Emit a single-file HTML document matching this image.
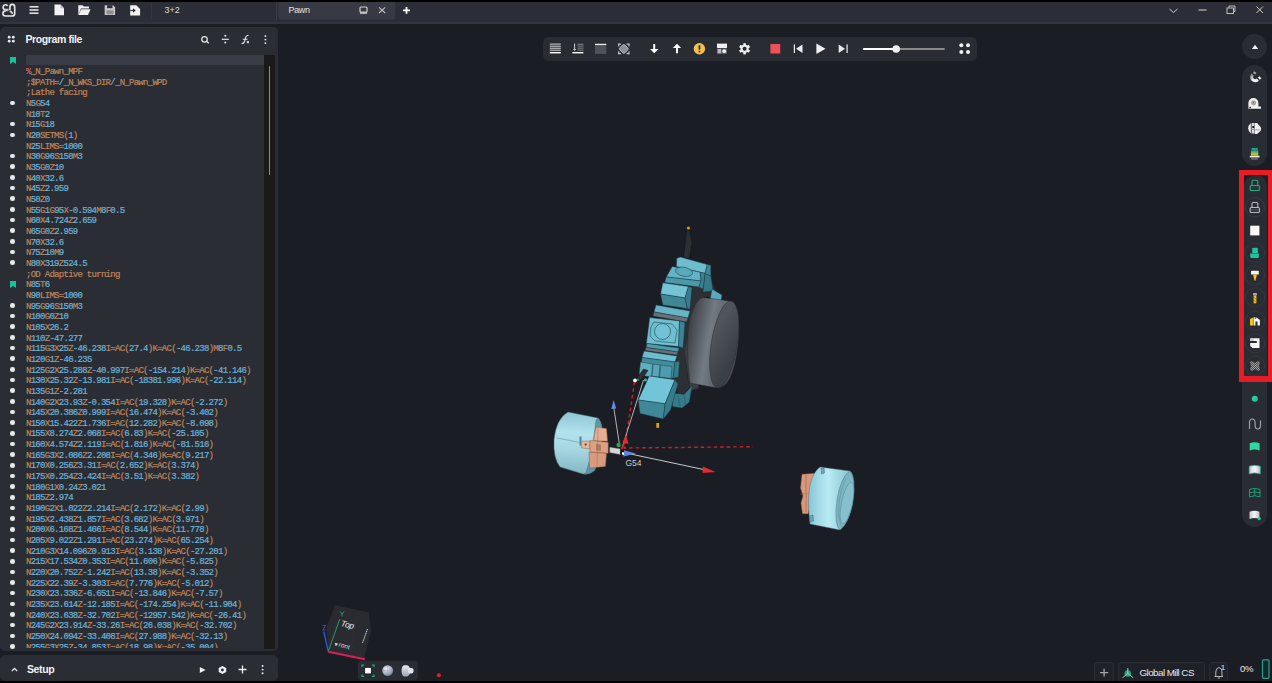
<!DOCTYPE html>
<html><head><meta charset="utf-8">
<style>
*{box-sizing:border-box}
html,body{margin:0;padding:0}
body{width:1272px;height:683px;overflow:hidden;background:#1b1d25;position:relative;font-family:"Liberation Sans",sans-serif;color:#e6e6e6}
.a{position:absolute}
#topblack{left:0;top:0;width:1272px;height:2px;background:#000}
#botblack{left:0;top:681px;width:1272px;height:2px;background:#000}
#title{left:0;top:2px;width:1272px;height:20px;background:#2b2e37}
#titleline{left:0;top:22px;width:1272px;height:1.5px;background:#31343d}
#panel{left:0;top:26.5px;width:278px;height:624px;background:#2b2d35;border-radius:5px;border-top:1px solid #30323a}
#setup{left:0;top:655px;width:278px;height:25.5px;background:#2b2d35;border-radius:5px}
.ptitle{font-weight:bold;font-size:10.5px;letter-spacing:-0.4px;color:#f2f2f2}
#code{left:26px;top:29px;width:238px;height:591.5px;overflow:hidden;font-family:"Liberation Mono",monospace;font-size:9px;letter-spacing:-0.72px;line-height:10.66px;-webkit-text-stroke:0.2px currentColor}
.ln{height:10.66px;white-space:pre}
.ln i,.ln b{font-style:normal;font-weight:normal}
#hl{left:26px;top:27px;width:238px;height:10px;background:#3a3c45}
#sb{left:264px;top:27px;width:11px;height:594.5px;background:#1a1a1b}
#sbthumb{left:268.6px;top:38px;width:1.8px;height:109.5px;background:#8c8c8c;border-radius:1px}
.dot{position:absolute;left:10.4px;width:4.6px;height:4.6px;border-radius:50%;background:#e8e8e8}
.bm{position:absolute;left:9.8px}
#gutter{left:0;top:28.8px;width:26px;height:593px}
#tb{left:543px;top:36.5px;width:434px;height:24px;background:#2a2c34;border-radius:6px}
.rpill{background:#2a2c34;border-radius:13px}
</style></head>
<body>
<div id="topblack" class="a"></div>
<div id="title" class="a"></div>
<div id="titleline" class="a"></div>

<!-- title bar icons -->
<svg class="a" style="left:0;top:0" width="1272" height="22" viewBox="0 0 1272 22">
  <!-- logo -->
  <g fill="none" stroke="#e8e8e8" stroke-width="1.6" stroke-linecap="round">
    <path d="M7.2 5.3Q5.6 4.2 4.2 5.2Q2.9 6.2 3.1 7.8Q3.3 9.3 5.2 9.7"/>
    <path d="M5.4 10.9Q2.9 11.3 2.9 13.5Q2.9 16 5.6 16H8.4"/>
    <path d="M9 16H12.2Q14.7 16 14.7 13.4V7Q14.7 4.4 12.2 4.4Q9.9 4.4 9.9 7V9.5"/>
    <path d="M10.4 11.2L12.3 13.1"/>
  </g>
  <rect x="5" y="8.7" width="3.6" height="2.5" fill="#c4c4c4"/>
  <!-- hamburger -->
  <g fill="#e0e0e0"><rect x="29.5" y="6" width="9" height="1.6"/><rect x="29.5" y="9.2" width="9" height="1.6"/><rect x="29.5" y="12.4" width="9" height="1.6"/></g>
  <!-- new file -->
  <path d="M54.5 4.6H60.5L64 8.2V15.2H54.5Z" fill="#f2f2f2"/><path d="M60.5 4.6V8.2H64" fill="#bdbdbd"/>
  <!-- folder -->
  <path d="M78.3 5.2H82.5L83.8 6.5H89V8.5H81L78.3 15Z" fill="#f0f0f0"/><path d="M81.3 9.2H90.6L88 15H78.3Z" fill="#f0f0f0"/>
  <!-- save -->
  <path d="M104.7 5.2H113L115.1 7.3V15H104.7Z" fill="#c9c9c9"/><rect x="107" y="5.2" width="5.5" height="3" fill="#2b2e37"/><rect x="106.5" y="10.3" width="7" height="4" fill="#8d8d8d"/>
  <!-- import -->
  <path d="M130.2 5.2H136.3L140.1 9V15.6H130.2Z" fill="#f2f2f2"/><path d="M130.2 10.5H134.5M133 9L134.8 10.5L133 12" stroke="#2b2e37" stroke-width="1.2" fill="none"/>
  <rect x="151" y="2.4" width="1" height="16" fill="#33363f"/>
  <!-- tab -->
  <rect x="276" y="2" width="1" height="18" fill="#3a3c44"/>
  <path d="M278.5 2H395.3V16.5Q395.3 19.5 392.3 19.5H281.5Q278.5 19.5 278.5 16.5Z" fill="#383a43"/>
  <!-- monitor icon -->
  <rect x="360" y="7" width="7" height="5.2" rx="1" fill="none" stroke="#cfcfcf" stroke-width="1.2"/><rect x="360" y="12.4" width="7" height="1.4" fill="#cfcfcf"/>
  <path d="M379 7.3L385.2 13M385.2 7.3L379 13" stroke="#bdbdbd" stroke-width="1.1"/>
  <path d="M403 10.3H410M406.5 6.9V13.7" stroke="#ffffff" stroke-width="1.8"/>
  <!-- window controls -->
  <path d="M1169.5 9L1173.5 12.5L1177.5 9" stroke="#cfcfcf" stroke-width="1" fill="none"/>
  <path d="M1198.5 10H1206.5" stroke="#bdbdbd" stroke-width="1.2"/>
  <rect x="1227" y="8" width="6.5" height="5.5" fill="none" stroke="#bdbdbd" stroke-width="1"/><path d="M1229 8V6H1235V11.5H1233.5" fill="none" stroke="#bdbdbd" stroke-width="1"/>
  <path d="M1256.5 6.5L1263 13M1263 6.5L1256.5 13" stroke="#cfcfcf" stroke-width="1"/>
</svg>
<div class="a" style="left:164.5px;top:4.6px;font-size:9px;color:#dcdcdc">3+2</div>
<div class="a" style="left:288.5px;top:4.6px;font-size:9px;letter-spacing:-0.35px;color:#e4e4e4">Pawn</div>

<!-- program panel -->
<div id="panel" class="a">
  <div id="hl" class="a"></div>
  <div id="sb" class="a"></div>
  <div id="sbthumb" class="a"></div>
  <div id="gutter" class="a"><svg class="bm" style="top:0.80px" width="6" height="7" viewBox="0 0 6 7"><path d="M0 0H6V7L3 5L0 7Z" fill="#19c39a"/></svg><div class="dot" style="top:44.24px"></div><div class="dot" style="top:65.56px"></div><div class="dot" style="top:76.22px"></div><div class="dot" style="top:97.54px"></div><div class="dot" style="top:108.20px"></div><div class="dot" style="top:118.86px"></div><div class="dot" style="top:129.52px"></div><div class="dot" style="top:140.18px"></div><div class="dot" style="top:150.84px"></div><div class="dot" style="top:161.50px"></div><div class="dot" style="top:172.16px"></div><div class="dot" style="top:182.82px"></div><div class="dot" style="top:193.48px"></div><div class="dot" style="top:204.14px"></div><svg class="bm" style="top:224.66px" width="6" height="7" viewBox="0 0 6 7"><path d="M0 0H6V7L3 5L0 7Z" fill="#19c39a"/></svg><div class="dot" style="top:246.78px"></div><div class="dot" style="top:257.44px"></div><div class="dot" style="top:268.10px"></div><div class="dot" style="top:278.76px"></div><div class="dot" style="top:289.42px"></div><div class="dot" style="top:300.08px"></div><div class="dot" style="top:310.74px"></div><div class="dot" style="top:321.40px"></div><div class="dot" style="top:332.06px"></div><div class="dot" style="top:342.72px"></div><div class="dot" style="top:353.38px"></div><div class="dot" style="top:364.04px"></div><div class="dot" style="top:374.70px"></div><div class="dot" style="top:385.36px"></div><div class="dot" style="top:396.02px"></div><div class="dot" style="top:406.68px"></div><div class="dot" style="top:417.34px"></div><div class="dot" style="top:428.00px"></div><div class="dot" style="top:438.66px"></div><div class="dot" style="top:449.32px"></div><div class="dot" style="top:459.98px"></div><div class="dot" style="top:470.64px"></div><div class="dot" style="top:481.30px"></div><div class="dot" style="top:491.96px"></div><div class="dot" style="top:502.62px"></div><div class="dot" style="top:513.28px"></div><div class="dot" style="top:523.94px"></div><div class="dot" style="top:534.60px"></div><div class="dot" style="top:545.26px"></div><div class="dot" style="top:555.92px"></div><div class="dot" style="top:566.58px"></div><div class="dot" style="top:577.24px"></div><div class="dot" style="top:587.90px"></div></div>
  <div id="code" class="a"><div class="ln">&nbsp;</div>
<div class="ln"><span style="color:#bf875b"><b style="color:#d8665a">%</b>_N_Pawn_MPF</span></div>
<div class="ln"><span style="color:#bf875b">;$PATH=<b style="color:#6cb4da">/</b>_N_WKS_DIR<b style="color:#6cb4da">/</b>_N_Pawn_WPD</span></div>
<div class="ln"><span style="color:#bf875b">;Lathe facing</span></div>
<div class="ln"><span style="color:#bf875b">N<i style="color:#6cb4da">5</i>G<i style="color:#6cb4da">54</i></span></div>
<div class="ln"><span style="color:#bf875b">N<i style="color:#6cb4da">10</i>T<i style="color:#6cb4da">2</i></span></div>
<div class="ln"><span style="color:#bf875b">N<i style="color:#6cb4da">15</i>G<i style="color:#6cb4da">18</i></span></div>
<div class="ln"><span style="color:#bf875b">N<i style="color:#6cb4da">20</i>SETMS(<i style="color:#6cb4da">1</i>)</span></div>
<div class="ln"><span style="color:#bf875b">N<i style="color:#6cb4da">25</i>LIMS=<i style="color:#6cb4da">1000</i></span></div>
<div class="ln"><span style="color:#bf875b">N<i style="color:#6cb4da">30</i>G<i style="color:#6cb4da">96</i>S<i style="color:#6cb4da">150</i>M<i style="color:#6cb4da">3</i></span></div>
<div class="ln"><span style="color:#bf875b">N<i style="color:#6cb4da">35</i>G<i style="color:#6cb4da">0</i>Z<i style="color:#6cb4da">10</i></span></div>
<div class="ln"><span style="color:#bf875b">N<i style="color:#6cb4da">40</i>X<i style="color:#6cb4da">32.6</i></span></div>
<div class="ln"><span style="color:#bf875b">N<i style="color:#6cb4da">45</i>Z<i style="color:#6cb4da">2.959</i></span></div>
<div class="ln"><span style="color:#bf875b">N<i style="color:#6cb4da">50</i>Z<i style="color:#6cb4da">0</i></span></div>
<div class="ln"><span style="color:#bf875b">N<i style="color:#6cb4da">55</i>G<i style="color:#6cb4da">1</i>G<i style="color:#6cb4da">95</i>X<i style="color:#6cb4da">-0.594</i>M<i style="color:#6cb4da">8</i>F<i style="color:#6cb4da">0.5</i></span></div>
<div class="ln"><span style="color:#bf875b">N<i style="color:#6cb4da">60</i>X<i style="color:#6cb4da">4.724</i>Z<i style="color:#6cb4da">2.659</i></span></div>
<div class="ln"><span style="color:#bf875b">N<i style="color:#6cb4da">65</i>G<i style="color:#6cb4da">0</i>Z<i style="color:#6cb4da">2.959</i></span></div>
<div class="ln"><span style="color:#bf875b">N<i style="color:#6cb4da">70</i>X<i style="color:#6cb4da">32.6</i></span></div>
<div class="ln"><span style="color:#bf875b">N<i style="color:#6cb4da">75</i>Z<i style="color:#6cb4da">10</i>M<i style="color:#6cb4da">9</i></span></div>
<div class="ln"><span style="color:#bf875b">N<i style="color:#6cb4da">80</i>X<i style="color:#6cb4da">319</i>Z<i style="color:#6cb4da">524.5</i></span></div>
<div class="ln"><span style="color:#bf875b">;OD Adaptive turning</span></div>
<div class="ln"><span style="color:#bf875b">N<i style="color:#6cb4da">85</i>T<i style="color:#6cb4da">6</i></span></div>
<div class="ln"><span style="color:#bf875b">N<i style="color:#6cb4da">90</i>LIMS=<i style="color:#6cb4da">1000</i></span></div>
<div class="ln"><span style="color:#bf875b">N<i style="color:#6cb4da">95</i>G<i style="color:#6cb4da">96</i>S<i style="color:#6cb4da">150</i>M<i style="color:#6cb4da">3</i></span></div>
<div class="ln"><span style="color:#bf875b">N<i style="color:#6cb4da">100</i>G<i style="color:#6cb4da">0</i>Z<i style="color:#6cb4da">10</i></span></div>
<div class="ln"><span style="color:#bf875b">N<i style="color:#6cb4da">105</i>X<i style="color:#6cb4da">26.2</i></span></div>
<div class="ln"><span style="color:#bf875b">N<i style="color:#6cb4da">110</i>Z<i style="color:#6cb4da">-47.277</i></span></div>
<div class="ln"><span style="color:#bf875b">N<i style="color:#6cb4da">115</i>G<i style="color:#6cb4da">3</i>X<i style="color:#6cb4da">25</i>Z<i style="color:#6cb4da">-46.238</i>I=AC(<i style="color:#6cb4da">27.4</i>)K=AC(<i style="color:#6cb4da">-46.238</i>)M<i style="color:#6cb4da">8</i>F<i style="color:#6cb4da">0.5</i></span></div>
<div class="ln"><span style="color:#bf875b">N<i style="color:#6cb4da">120</i>G<i style="color:#6cb4da">1</i>Z<i style="color:#6cb4da">-46.235</i></span></div>
<div class="ln"><span style="color:#bf875b">N<i style="color:#6cb4da">125</i>G<i style="color:#6cb4da">2</i>X<i style="color:#6cb4da">25.288</i>Z<i style="color:#6cb4da">-40.997</i>I=AC(<i style="color:#6cb4da">-154.214</i>)K=AC(<i style="color:#6cb4da">-41.146</i>)</span></div>
<div class="ln"><span style="color:#bf875b">N<i style="color:#6cb4da">130</i>X<i style="color:#6cb4da">25.32</i>Z<i style="color:#6cb4da">-13.981</i>I=AC(<i style="color:#6cb4da">-18381.996</i>)K=AC(<i style="color:#6cb4da">-22.114</i>)</span></div>
<div class="ln"><span style="color:#bf875b">N<i style="color:#6cb4da">135</i>G<i style="color:#6cb4da">1</i>Z<i style="color:#6cb4da">-2.281</i></span></div>
<div class="ln"><span style="color:#bf875b">N<i style="color:#6cb4da">140</i>G<i style="color:#6cb4da">2</i>X<i style="color:#6cb4da">23.93</i>Z<i style="color:#6cb4da">-0.354</i>I=AC(<i style="color:#6cb4da">19.328</i>)K=AC(<i style="color:#6cb4da">-2.272</i>)</span></div>
<div class="ln"><span style="color:#bf875b">N<i style="color:#6cb4da">145</i>X<i style="color:#6cb4da">20.386</i>Z<i style="color:#6cb4da">0.999</i>I=AC(<i style="color:#6cb4da">16.474</i>)K=AC(<i style="color:#6cb4da">-3.402</i>)</span></div>
<div class="ln"><span style="color:#bf875b">N<i style="color:#6cb4da">150</i>X<i style="color:#6cb4da">15.422</i>Z<i style="color:#6cb4da">1.736</i>I=AC(<i style="color:#6cb4da">12.282</i>)K=AC(<i style="color:#6cb4da">-8.098</i>)</span></div>
<div class="ln"><span style="color:#bf875b">N<i style="color:#6cb4da">155</i>X<i style="color:#6cb4da">8.274</i>Z<i style="color:#6cb4da">2.068</i>I=AC(<i style="color:#6cb4da">6.83</i>)K=AC(<i style="color:#6cb4da">-25.105</i>)</span></div>
<div class="ln"><span style="color:#bf875b">N<i style="color:#6cb4da">160</i>X<i style="color:#6cb4da">4.574</i>Z<i style="color:#6cb4da">2.119</i>I=AC(<i style="color:#6cb4da">1.816</i>)K=AC(<i style="color:#6cb4da">-81.516</i>)</span></div>
<div class="ln"><span style="color:#bf875b">N<i style="color:#6cb4da">165</i>G<i style="color:#6cb4da">3</i>X<i style="color:#6cb4da">2.086</i>Z<i style="color:#6cb4da">2.208</i>I=AC(<i style="color:#6cb4da">4.346</i>)K=AC(<i style="color:#6cb4da">9.217</i>)</span></div>
<div class="ln"><span style="color:#bf875b">N<i style="color:#6cb4da">170</i>X<i style="color:#6cb4da">0.256</i>Z<i style="color:#6cb4da">3.31</i>I=AC(<i style="color:#6cb4da">2.652</i>)K=AC(<i style="color:#6cb4da">3.374</i>)</span></div>
<div class="ln"><span style="color:#bf875b">N<i style="color:#6cb4da">175</i>X<i style="color:#6cb4da">0.254</i>Z<i style="color:#6cb4da">3.424</i>I=AC(<i style="color:#6cb4da">3.51</i>)K=AC(<i style="color:#6cb4da">3.382</i>)</span></div>
<div class="ln"><span style="color:#bf875b">N<i style="color:#6cb4da">180</i>G<i style="color:#6cb4da">1</i>X<i style="color:#6cb4da">0.24</i>Z<i style="color:#6cb4da">3.021</i></span></div>
<div class="ln"><span style="color:#bf875b">N<i style="color:#6cb4da">185</i>Z<i style="color:#6cb4da">2.974</i></span></div>
<div class="ln"><span style="color:#bf875b">N<i style="color:#6cb4da">190</i>G<i style="color:#6cb4da">2</i>X<i style="color:#6cb4da">1.022</i>Z<i style="color:#6cb4da">2.214</i>I=AC(<i style="color:#6cb4da">2.172</i>)K=AC(<i style="color:#6cb4da">2.99</i>)</span></div>
<div class="ln"><span style="color:#bf875b">N<i style="color:#6cb4da">195</i>X<i style="color:#6cb4da">2.438</i>Z<i style="color:#6cb4da">1.857</i>I=AC(<i style="color:#6cb4da">3.682</i>)K=AC(<i style="color:#6cb4da">3.971</i>)</span></div>
<div class="ln"><span style="color:#bf875b">N<i style="color:#6cb4da">200</i>X<i style="color:#6cb4da">6.168</i>Z<i style="color:#6cb4da">1.466</i>I=AC(<i style="color:#6cb4da">8.544</i>)K=AC(<i style="color:#6cb4da">11.778</i>)</span></div>
<div class="ln"><span style="color:#bf875b">N<i style="color:#6cb4da">205</i>X<i style="color:#6cb4da">9.022</i>Z<i style="color:#6cb4da">1.291</i>I=AC(<i style="color:#6cb4da">23.274</i>)K=AC(<i style="color:#6cb4da">65.254</i>)</span></div>
<div class="ln"><span style="color:#bf875b">N<i style="color:#6cb4da">210</i>G<i style="color:#6cb4da">3</i>X<i style="color:#6cb4da">14.096</i>Z<i style="color:#6cb4da">0.913</i>I=AC(<i style="color:#6cb4da">3.138</i>)K=AC(<i style="color:#6cb4da">-27.201</i>)</span></div>
<div class="ln"><span style="color:#bf875b">N<i style="color:#6cb4da">215</i>X<i style="color:#6cb4da">17.534</i>Z<i style="color:#6cb4da">0.353</i>I=AC(<i style="color:#6cb4da">11.606</i>)K=AC(<i style="color:#6cb4da">-5.825</i>)</span></div>
<div class="ln"><span style="color:#bf875b">N<i style="color:#6cb4da">220</i>X<i style="color:#6cb4da">20.752</i>Z<i style="color:#6cb4da">-1.242</i>I=AC(<i style="color:#6cb4da">13.38</i>)K=AC(<i style="color:#6cb4da">-3.352</i>)</span></div>
<div class="ln"><span style="color:#bf875b">N<i style="color:#6cb4da">225</i>X<i style="color:#6cb4da">22.39</i>Z<i style="color:#6cb4da">-3.303</i>I=AC(<i style="color:#6cb4da">7.776</i>)K=AC(<i style="color:#6cb4da">-5.012</i>)</span></div>
<div class="ln"><span style="color:#bf875b">N<i style="color:#6cb4da">230</i>X<i style="color:#6cb4da">23.336</i>Z<i style="color:#6cb4da">-6.651</i>I=AC(<i style="color:#6cb4da">-13.846</i>)K=AC(<i style="color:#6cb4da">-7.57</i>)</span></div>
<div class="ln"><span style="color:#bf875b">N<i style="color:#6cb4da">235</i>X<i style="color:#6cb4da">23.614</i>Z<i style="color:#6cb4da">-12.185</i>I=AC(<i style="color:#6cb4da">-174.254</i>)K=AC(<i style="color:#6cb4da">-11.904</i>)</span></div>
<div class="ln"><span style="color:#bf875b">N<i style="color:#6cb4da">240</i>X<i style="color:#6cb4da">23.638</i>Z<i style="color:#6cb4da">-32.702</i>I=AC(<i style="color:#6cb4da">-12957.542</i>)K=AC(<i style="color:#6cb4da">-26.41</i>)</span></div>
<div class="ln"><span style="color:#bf875b">N<i style="color:#6cb4da">245</i>G<i style="color:#6cb4da">2</i>X<i style="color:#6cb4da">23.914</i>Z<i style="color:#6cb4da">-33.26</i>I=AC(<i style="color:#6cb4da">26.038</i>)K=AC(<i style="color:#6cb4da">-32.702</i>)</span></div>
<div class="ln"><span style="color:#bf875b">N<i style="color:#6cb4da">250</i>X<i style="color:#6cb4da">24.094</i>Z<i style="color:#6cb4da">-33.408</i>I=AC(<i style="color:#6cb4da">27.988</i>)K=AC(<i style="color:#6cb4da">-32.13</i>)</span></div>
<div class="ln"><span style="color:#bf875b">N<i style="color:#6cb4da">255</i>G<i style="color:#6cb4da">3</i>X<i style="color:#6cb4da">25</i>Z<i style="color:#6cb4da">-34.853</i>I=AC(<i style="color:#6cb4da">18.98</i>)K=AC(<i style="color:#6cb4da">-35.004</i>)</span></div>
</div>
</div>
<svg class="a" style="left:0;top:26" width="278" height="30" viewBox="0 26 278 30">
  <g fill="#eaeaea"><circle cx="9.2" cy="37.2" r="1.4"/><circle cx="13.3" cy="37.2" r="1.4"/><circle cx="9.2" cy="41.2" r="1.4"/><circle cx="13.3" cy="41.2" r="1.4"/></g>
  <circle cx="204.5" cy="39.3" r="2.75" fill="none" stroke="#e2e2e2" stroke-width="1.3"/><path d="M206.5 41.3L208.8 43.3" stroke="#e2e2e2" stroke-width="1.5"/>
  <g fill="#e6e6e6"><circle cx="225.3" cy="35.8" r="1"/><circle cx="225.3" cy="42.5" r="1"/><rect x="221.8" y="38.7" width="7" height="1.2"/></g>
  <path d="M248.6 35.3Q246.2 35.2 245.6 37.5L244.6 41.5Q244 43.6 241.6 43.6M242.8 39.3H247.5" stroke="#e2e2e2" stroke-width="1.1" fill="none"/><rect x="246.8" y="41" width="2.2" height="2.2" fill="#d0d0d0"/>
  <g fill="#eeeeee"><circle cx="265.4" cy="36.1" r="0.95"/><circle cx="265.4" cy="39.6" r="0.95"/><circle cx="265.4" cy="43.1" r="0.95"/></g>
</svg>
<div class="a ptitle" style="left:25.5px;top:32.5px">Program file</div>

<!-- setup panel -->
<div id="setup" class="a"></div>
<svg class="a" style="left:0;top:655" width="278" height="26" viewBox="0 655 278 26">
  <path d="M11.8 671L14.5 668.5L17.2 671" stroke="#e2e2e2" stroke-width="1.3" fill="none"/>
  <path d="M199.8 667V673L205.5 670Z" fill="#f2f2f2"/>
  <path d="M222.4 666L226.2 668V672L222.4 674L218.7 672V668Z" fill="#f0f0f0"/><circle cx="222.4" cy="670" r="1.4" fill="#2b2d35"/>
  <path d="M238.5 669.5H246.5M242.5 665.5V673.5" stroke="#efefef" stroke-width="1.3"/>
  <g fill="#efefef"><circle cx="262.6" cy="666" r="0.95"/><circle cx="262.6" cy="669.6" r="0.95"/><circle cx="262.6" cy="673.2" r="0.95"/></g>
</svg>
<div class="a ptitle" style="left:27px;top:662.5px;font-size:10.5px">Setup</div>

<!-- viewport toolbar -->
<div id="tb" class="a"></div>
<svg class="a" style="left:540;top:34" width="440" height="30" viewBox="540 34 440 30">
  <!-- icon1 lines -->
  <g fill="#d8d8d8"><rect x="549.8" y="43.6" width="11" height="1"/><rect x="549.8" y="45.7" width="11" height="1"/><rect x="549.8" y="47.7" width="11" height="1"/><rect x="549.8" y="49.7" width="11" height="1"/></g>
  <rect x="549.8" y="52" width="11" height="1.4" fill="#ffffff"/>
  <!-- icon2 -->
  <path d="M574.6 43.5V49.8" stroke="#cfcfcf" stroke-width="1"/><path d="M573 49H576.2L574.6 51Z" fill="#cfcfcf"/>
  <g fill="#9a9a9a"><rect x="577.5" y="43.8" width="6" height="0.8"/><rect x="577.5" y="45.7" width="6" height="0.8"/><rect x="577.5" y="47.7" width="6" height="0.8"/><rect x="577.5" y="49.7" width="6" height="0.8"/></g>
  <rect x="572.4" y="52" width="11" height="1.4" fill="#ffffff"/>
  <!-- icon3 -->
  <rect x="595" y="43.8" width="11.3" height="10.2" fill="#4b4d55"/><rect x="595" y="43.8" width="11.3" height="1.3" fill="#ececec"/>
  <g fill="#5c5e66"><rect x="595" y="46.8" width="11.3" height="0.5"/><rect x="595" y="48.8" width="11.3" height="0.5"/><rect x="595" y="50.8" width="11.3" height="0.5"/><rect x="595" y="52.6" width="11.3" height="0.5"/></g>
  <!-- icon4 select -->
  <path d="M618.6 46.5V44.1H621M626.6 44.1H629V46.5M629 51.3V53.7H626.6M621 53.7H618.6V51.3" stroke="#c4c4cc" stroke-width="1.2" fill="none"/>
  <rect x="620.3" y="45.4" width="7" height="7" rx="1.6" transform="rotate(45 623.8 48.9)" fill="#8c8e96" stroke="#bfc1c8" stroke-width="0.9"/>
  <!-- down arrow -->
  <path d="M654.2 44V49.5" stroke="#fff" stroke-width="2"/><path d="M650 49L654.2 53.2L658.5 49Z" fill="#fff"/>
  <path d="M677 53.2V47.5" stroke="#fff" stroke-width="2"/><path d="M672.8 48L677 43.8L681.2 48Z" fill="#fff"/>
  <!-- warning -->
  <circle cx="699.4" cy="48.8" r="5.7" fill="#f4c24c"/><rect x="698.6" y="45.2" width="1.7" height="4.5" fill="#2a2c34"/><rect x="698.6" y="50.8" width="1.7" height="1.6" fill="#2a2c34"/>
  <!-- panel icon -->
  <rect x="717" y="43.6" width="10" height="4.4" fill="#f0f0f4"/><rect x="717" y="48.4" width="10" height="5.6" fill="#5a5c64"/><rect x="717.6" y="49" width="3.4" height="4.3" fill="#b8b8bc"/><circle cx="724.2" cy="51.2" r="1.9" fill="#f0f0f4"/>
  <!-- gear -->
  <g transform="translate(744.6 48.8)"><circle r="4" fill="#f0f0f0"/>
  <g fill="#f0f0f0"><rect x="-1.3" y="-5.6" width="2.6" height="11.2"/><rect x="-1.3" y="-5.6" width="2.6" height="11.2" transform="rotate(60)"/><rect x="-1.3" y="-5.6" width="2.6" height="11.2" transform="rotate(120)"/></g>
  <circle r="2" fill="#1e2026"/><circle r="0.7" fill="#3a3c44"/></g>
  <!-- stop -->
  <rect x="770.4" y="44" width="9.8" height="9.5" fill="#f0505a"/>
  <!-- skip back -->
  <rect x="793.8" y="44.4" width="1.2" height="8.6" fill="#eaeaea"/><path d="M802.5 44.4V53L796 48.7Z" fill="#eaeaea"/>
  <path d="M816.4 43.6V54L825.5 48.8Z" fill="#f0f0f0"/>
  <path d="M838.7 44.4V53L845 48.7Z" fill="#eaeaea"/><rect x="846.5" y="44.4" width="1.2" height="8.6" fill="#eaeaea"/>
  <!-- slider -->
  <rect x="863.2" y="48" width="81.5" height="2" fill="#8a8a8c"/>
  <rect x="863.2" y="48" width="33" height="2" fill="#ffffff"/>
  <circle cx="896.2" cy="49" r="3.8" fill="#f0f0f0"/>
  <g fill="#f2f2f2"><circle cx="961.3" cy="45.3" r="2"/><circle cx="968" cy="45.3" r="2"/><circle cx="961.3" cy="52" r="2"/><circle cx="968" cy="52" r="2"/></g>
</svg>

<!-- right sidebar -->
<div class="a rpill" style="left:1242.2px;top:34.1px;width:24.8px;height:25px;border-radius:50%"></div>
<div class="a rpill" style="left:1242.2px;top:65.3px;width:24.8px;height:100.8px"></div>
<div class="a" style="left:1239px;top:170px;width:33px;height:212px;background:#e81c24"></div>
<div class="a" style="left:1244px;top:175.3px;width:23.8px;height:201px;background:#1b1d25"></div>
<div class="a rpill" style="left:1244.4px;top:175.3px;width:22.6px;height:201px;border-radius:12px 12px 0 0"></div>
<div class="a rpill" style="left:1242.2px;top:382px;width:24.8px;height:145.3px;border-radius:0 0 13px 13px"></div>
<svg class="a" style="left:1236;top:30" width="36" height="500" viewBox="1236 30 36 500">
  <path d="M1251.8 48.9L1255 44.8L1258.2 48.9Z" fill="#f2f2f2"/>
    <!-- group1 -->
  <defs>
    <linearGradient id="mag" x1="0" y1="0" x2="1" y2="1"><stop offset="0" stop-color="#8a8a8a"/><stop offset="0.6" stop-color="#f4f4f4"/></linearGradient>
    <linearGradient id="stk" x1="0" y1="0" x2="0" y2="1"><stop offset="0" stop-color="#16a08a"/><stop offset="1" stop-color="#f2d31a"/></linearGradient>
    <linearGradient id="wbox" x1="0" y1="0" x2="1" y2="0"><stop offset="0" stop-color="#c8c8d0"/><stop offset="0.5" stop-color="#f4f4f8"/><stop offset="1" stop-color="#c0c0c8"/></linearGradient>
    <pattern id="chk" width="2" height="2" patternUnits="userSpaceOnUse"><rect width="1" height="1" fill="#9a9a9a"/><rect x="1" y="1" width="1" height="1" fill="#9a9a9a"/><rect x="1" width="1" height="1" fill="#505058"/><rect y="1" width="1" height="1" fill="#505058"/></pattern>
  </defs>
  <path d="M1252.6 74.6A3.6 3.6 0 1 0 1257.8 79.6" fill="none" stroke="url(#mag)" stroke-width="3"/>
  <rect x="1253.3" y="71.8" width="2.8" height="2.2" fill="#9a9a9a" transform="rotate(30 1254.7 72.9)"/>
  <rect x="1258.2" y="76.9" width="2.8" height="2.2" fill="#f0f0f0" transform="rotate(45 1259.6 78)"/>
  <!-- tape -->
  <path d="M1248.4 103A5 5 0 0 1 1258.4 103V106.5H1261V108.8H1248.4Z" fill="#f0f0f0"/>
  <circle cx="1253.5" cy="102.8" r="2.6" fill="#a8a8a8"/><circle cx="1253.5" cy="102.8" r="0.8" fill="#777"/>
  <rect x="1249.4" y="106.8" width="1.6" height="1.4" fill="#2a2c34"/>
  <!-- clamp -->
  <path d="M1250.8 123Q1248.2 125.5 1248.2 128.3Q1248.2 131 1250.8 133.6Z" fill="#f2f2f2"/>
  <rect x="1251.6" y="123" width="3" height="10.6" fill="#d8d8d8"/>
  <rect x="1252.3" y="126" width="1.8" height="2" fill="#1a1a1a"/>
  <rect x="1251.6" y="129" width="3" height="1" fill="#9a9a9a"/>
  <path d="M1255 123H1257L1261 127.5V130.5L1257 134H1255Z" fill="#f2f2f2"/>
  <rect x="1255" y="129.3" width="5.5" height="1" fill="#a0a0a0"/>
  <!-- stock gradient -->
  <rect x="1251.5" y="148" width="6.3" height="2.5" fill="#16a08a"/>
  <rect x="1250.9" y="150.5" width="7.4" height="5" fill="url(#stk)"/>
  <rect x="1249.8" y="155.8" width="9.7" height="1.6" fill="#f4f4f4"/>
  <rect x="1251" y="158.4" width="7" height="1.1" fill="#8a8a8a"/>

  <!-- group2 rings -->
  <g fill="none" stroke="#363842" stroke-width="0.8">
    <circle cx="1255" cy="207.3" r="9.6"/><circle cx="1255" cy="252.8" r="9.6"/><circle cx="1255" cy="275.3" r="9.6"/>
    <circle cx="1255" cy="297.3" r="9.6"/><circle cx="1255" cy="320.8" r="9.6"/><circle cx="1255" cy="343.3" r="9.6"/><circle cx="1255" cy="365.8" r="9.6"/>
  </g>
  <!-- stock outline green -->
  <g fill="none" stroke="#1fae85" stroke-width="1.1">
    <path d="M1252 185.3V181.5Q1252 180.3 1253.2 180.3H1256.6Q1257.8 180.3 1257.8 181.5V185.3"/>
    <rect x="1250.2" y="185.5" width="9.2" height="5" rx="1"/>
  </g>
  <rect x="1251" y="187.5" width="7.6" height="1" fill="#1b4a3e"/>
  <g fill="none" stroke="#b8b8c0" stroke-width="1.1">
    <path d="M1252 207.3V203.5Q1252 202.5 1253.2 202.5H1256.6Q1257.8 202.5 1257.8 203.5V207.3"/>
    <rect x="1250.2" y="207.5" width="9.2" height="5" rx="1"/>
  </g>
  <rect x="1251" y="209.5" width="7.6" height="1" fill="#55565c"/>
  <rect x="1250.2" y="225.7" width="9.2" height="9.7" fill="#f8f8f8"/>
  <!-- green filled -->
  <path d="M1252.2 253.3V248.8Q1252.2 247.7 1253.3 247.7H1256.8Q1257.9 247.7 1257.9 248.8V253.3Z" fill="#1fc49a"/>
  <path d="M1250.2 253.3H1258.9V256.8Q1258.9 257.9 1257.8 257.9H1251.3Q1250.2 257.9 1250.2 256.8Z" fill="#1fc49a"/>
  <rect x="1250.2" y="253.4" width="8.7" height="0.6" fill="#127a60"/>
  <!-- cone tool -->
  <path d="M1251 271.5Q1251 270.7 1252 270.7H1258Q1258.8 270.7 1258.8 271.5V274.5H1251Z" fill="#f4f4f4"/>
  <path d="M1253 274.6H1257L1255.4 280.8H1254.6Z" fill="#f0c419"/>
  <!-- drill -->
  <rect x="1253" y="293" width="4" height="2.5" rx="0.8" fill="#a8a8a8"/>
  <path d="M1253.6 295.6H1256.4V303.3H1253.6Z" fill="#f0c419"/>
  <path d="M1253.6 297.5L1256.4 299M1253.6 300.2L1256.4 301.8" stroke="#6a5a10" stroke-width="0.6"/>
  <!-- clamp yellow -->
  <path d="M1250 319L1253 317.5V325.4H1250Z" fill="#f0c419"/>
  <path d="M1253.5 317.5Q1255 316.5 1256.5 317.5L1259.9 320V325.4H1257.5V321.5H1255.4V325.4H1253.5Z" fill="#f4f4f4"/>
  <circle cx="1255.5" cy="318" r="0.8" fill="#2a2c34"/>
  <!-- bracket -->
  <path d="M1250.2 338.2H1259.5V348H1252.5L1250.2 346V343H1256.8V341H1250.2Z" fill="#f4f4f4"/>
  <rect x="1251.5" y="339.6" width="2" height="0.9" fill="#777"/>
  <!-- checker -->
  <path d="M1250 362L1252 361L1255 363L1258 361L1260 362L1259 366L1260 370L1258 371L1255 369L1252 371L1250 370L1251 366Z" fill="url(#chk)"/>

  <!-- group3 -->
  <circle cx="1254.8" cy="398.8" r="3" fill="#1fd09a"/>
  <path d="M1249.5 429V423Q1249.5 419 1252.3 419Q1255.1 419 1255.1 423V425Q1255.1 429 1257.8 429Q1260.5 429 1260.5 425V420.5" fill="none" stroke="#a8a8b0" stroke-width="1.1"/>
  <path d="M1249.7 443.3Q1254.7 441.3 1259.6 443.3V450.5Q1254.7 448.5 1249.7 450.5Z" fill="#2ad8a8"/>
  <path d="M1249.2 466.3Q1254.7 464.3 1260.3 466.3V474Q1254.7 471.8 1249.2 474Z" fill="url(#wbox)" stroke="#1fae85" stroke-width="0.8"/>
  <g fill="none" stroke="#1aa07a" stroke-width="1">
    <path d="M1249.5 489.4Q1254.7 487.4 1260 489.4V496.8Q1254.7 494.8 1249.5 496.8Z"/>
    <path d="M1254.7 488.4V495.8M1249.5 492.8Q1254.7 491 1260 492.8"/>
  </g>
  <path d="M1249.5 511.7Q1254.5 509.7 1259.5 511.7V519Q1254.5 517 1249.5 519Z" fill="url(#wbox)"/>
  <circle cx="1259.2" cy="518.6" r="1.6" fill="#1fd09a"/>

</svg>

<!-- status bar -->
<div class="a" style="left:1094.3px;top:662.4px;width:19.5px;height:19.5px;background:#1f2128;border:1px solid #2b2d35;border-radius:3px"></div>
<div class="a" style="left:1118.1px;top:662.4px;width:86.5px;height:19.5px;background:#1f2128;border:1px solid #2b2d35;border-radius:3px"></div>
<div class="a" style="left:1208.9px;top:662.4px;width:19.5px;height:19.5px;background:#1f2128;border:1px solid #2b2d35;border-radius:3px"></div>
<svg class="a" style="left:1090;top:655" width="182" height="28" viewBox="1090 655 182 28">
  <path d="M1100 672.7H1108.2M1104.1 668.8V676.6" stroke="#a8a8a8" stroke-width="1.3"/>
  <circle cx="1127.8" cy="673.5" r="3.3" fill="#1aa37a"/>
  <path d="M1127.8 668V673.5L1122.5 677.8M1127.8 673.5L1133.2 677.8" stroke="#cfcfcf" stroke-width="0.9" fill="none"/>
  <path d="M1214.5 676.5H1223M1215.8 676.5V672Q1215.8 668 1219 667.5Q1222 668 1222 672V676.5M1217.8 678H1220" stroke="#c8c8c8" stroke-width="0.9" fill="none"/>
  <rect x="1262.5" y="659.8" width="6.5" height="18.5" rx="1" fill="#122a2a" stroke="#2a9d8f" stroke-width="1.2"/>
</svg>
<div class="a" style="left:1139.5px;top:667px;font-size:9.8px;letter-spacing:-0.55px;color:#e8e8e8">Global Mill CS</div>
<div class="a" style="left:1220.8px;top:663px;font-size:8px;color:#e8e8e8">1</div>
<div class="a" style="left:1240px;top:663px;font-size:9.5px;letter-spacing:-0.4px;color:#e8e8e8">0%</div>

<!-- model -->
<svg class="a" style="left:0;top:0;pointer-events:none" width="1272" height="683" viewBox="0 0 1272 683">
<defs>
  <linearGradient id="cylside" gradientUnits="userSpaceOnUse" x1="688" y1="340" x2="732" y2="348">
    <stop offset="0" stop-color="#41454b"/><stop offset="0.45" stop-color="#737a82"/><stop offset="0.75" stop-color="#5e646b"/><stop offset="1" stop-color="#4e535a"/>
  </linearGradient>
  <linearGradient id="cface" gradientUnits="userSpaceOnUse" x1="711" y1="340" x2="738" y2="350"><stop offset="0" stop-color="#50555c"/><stop offset="1" stop-color="#3a3e45"/></linearGradient>
  <linearGradient id="chuck" gradientUnits="userSpaceOnUse" x1="575" y1="410" x2="572" y2="476">
    <stop offset="0" stop-color="#8cc3d0"/><stop offset="0.35" stop-color="#b2e2ee"/><stop offset="0.6" stop-color="#a6d6e2"/><stop offset="1" stop-color="#7fb4c2"/>
  </linearGradient>
  <linearGradient id="chuck2" gradientUnits="userSpaceOnUse" x1="810" y1="500" x2="850" y2="500">
    <stop offset="0" stop-color="#8fc8d6"/><stop offset="0.45" stop-color="#b8ebf5"/><stop offset="1" stop-color="#8cc4d2"/>
  </linearGradient>
</defs>
<g stroke="#183640" stroke-width="0.45" stroke-linejoin="round">
  <!-- upper tool -->
  <path d="M686.5 231L689.5 230.5L692 243L689.5 258L683.5 258L685.5 242Z" fill="#2c2f33" stroke="#0e0f11"/>
  <circle cx="688.4" cy="228" r="1.5" fill="#e0a020" stroke="none"/>
  <!-- turret dark disc -->
  <path d="M697 276L713 283L719 298L704 297L691 318L686 350L688 377L691.5 384.6L684 394.5L677.6 393.4L674 372L675 345L682 308L690 288Z" fill="#2c2f34" stroke="#16191d"/>
  <!-- right blue protrusions -->
  <path d="M705 273L711 276L713 291L703 292Z" fill="#357a88"/>
  <path d="M712 289L722 295L721 302L710 300Z" fill="#5aaabb"/>
  <!-- cylinder step ring -->
  <path d="M699 298L706 300L695 345L699 388L690 391L684 350Z" fill="#3a3e44" stroke="#1e2125"/>
  <!-- cylinder side -->
  <path d="M703 297.5L730 301Q742 304 738 345Q733 388 717 388L690 383Q685 345 690 318Q695 300 703 297.5Z" fill="url(#cylside)" stroke="#24272b"/>
  <!-- cylinder face -->
  <ellipse cx="724.2" cy="344.5" rx="13" ry="44" transform="rotate(9 724.2 344.5)" fill="url(#cface)" stroke="#25282c"/>
  <!-- top bar -->
  <path d="M676.8 258.2L680.4 257L707.3 264.6L705 273.4L676.3 266.5Z" fill="#6dbdcd"/>
  <path d="M707.3 264.6L710.8 265.2L710.8 276L705 273.4Z" fill="#3f8896"/>
  <!-- block1 -->
  <path d="M672.2 266.4L700.3 272.2L701 281L666.3 277Z" fill="#62b3c4"/>
  <ellipse cx="684" cy="271.8" rx="8.6" ry="4.5" transform="rotate(11 684 271.8)" fill="#5aa9bb" stroke="#214d58" stroke-width="0.6"/>
  <path d="M666.3 277L701 281L699 287L664.5 282.5Z" fill="#4a98a9"/>
  <path d="M700.3 272.2L705 273.4L703 289L699 287L701 281Z" fill="#3a8291"/>
  <!-- block2 -->
  <path d="M662.8 282.8L688.5 286.5L685 298L660.5 294Z" fill="#74c4d5"/>
  <path d="M660.5 294L685 298L687.4 308.5L662.8 305Z" fill="#3f8795"/>
  <path d="M688.5 286.5L692 287.5L690 309L687.4 308.5L685 298Z" fill="#387d8c"/>
  <path d="M656 305L690 311L688 318L654 312Z" fill="#66b5c7"/>
  <path d="M654 312L688 318L686.5 322L653 316Z" fill="#687076"/>
  <!-- block3 -->
  <path d="M649.7 317.6L679.5 320.9L678.6 346.6L646.4 343.4Z" fill="#6ebfd1"/>
  <path d="M679.5 320.9L685 322.5L683 348L678.6 346.6Z" fill="#3d8595"/>
  <path d="M654 322L672 324L677 330L675 343L655 341L650 336L651 327Z" fill="none" stroke="#173640" stroke-width="0.5"/>
  <circle cx="662.5" cy="331.5" r="8" fill="#70c2d4" stroke="#173640" stroke-width="0.55"/>
  <path d="M647 343.5L679 348L678 352L646 347.5Z" fill="#4d9cad"/>
  <path d="M646 347.5L678 352L677 355L645 350.5Z" fill="#6a7277"/>
  <!-- block4 -->
  <path d="M644 351L677 356L675 362L642 357.5Z" fill="#6cbdcf"/>
  <path d="M642 357.5L675 362L673 378.5L640 374Z" fill="#428b9a"/>
  <path d="M640.5 362L652.5 364L651.5 377L639 375Z" fill="#5eafc1"/>
  <path d="M653 364L660 365L659 377L652 376.5Z" fill="#57a6b8"/>
  <path d="M660.5 365L672 366.5L671 378.5L659.5 377Z" fill="#4d9bac"/>
  <path d="M675 362L679.5 361L678.5 377L673 378.5Z" fill="#367b8a"/>
  <!-- tool holder -->
  <path d="M636.5 378.5L643.5 369L648 370.5L641 380.5Z" fill="#2c2f33" stroke="#0e0f11"/>
  <!-- block5 -->
  <path d="M672.4 394L677.6 393.4L684 394.5L692.2 385.4L689.3 402.2L682 408L672.4 406.6Z" fill="#367b8a"/><path d="M678 396L680 406M684 396L686 405" stroke="#24505a" stroke-width="0.5" fill="none"/>
  <path d="M649.2 375.9L675 379.7L665.1 403.8L638.2 400Z" fill="#72c5d7"/>
  <path d="M638.2 400L665.1 403.8L663.3 419L640 413.4Z" fill="#3e8898"/>
  <path d="M675 379.7L678 384L670.6 410L663.3 419L665.1 403.8Z" fill="#357b8a"/>
  <circle cx="635" cy="380.5" r="1.9" fill="#ffffff" stroke="none"/>
  <circle cx="638" cy="379.8" r="1.1" fill="#1f9f4a" stroke="none"/>
  <circle cx="645.5" cy="380" r="1.4" fill="#5ab0b8" stroke="none"/>
  <!-- lower tool -->
  <path d="M656.5 418L659 418L659 423L656.5 423Z" fill="#1d1e20" stroke="none"/>
  <rect x="656.3" y="423" width="2.8" height="4.8" fill="#d9a21a" stroke="none"/>
</g>

<!-- dashed lines & axes -->
<g fill="none">
  <path d="M634.5 382L624.5 448L753 446.7" stroke="#d21f26" stroke-width="1.4" stroke-dasharray="3.5 3"/>
  <path d="M619.5 445L613.7 407" stroke="#c4c4c4" stroke-width="0.9"/>
  <path d="M611.3 409L613.6 400L616.2 408.5Z" fill="#6a8ce8"/>
  <path d="M622 448L643.5 380" stroke="#c4c4c4" stroke-width="0.9"/>
  <path d="M621 452L706 470" stroke="#c8c8c8" stroke-width="1"/>
  <path d="M703 466.5L715.5 472L702.5 473Z" fill="#e8272e"/>
  <path d="M621 451L625.5 440" stroke="#e02828" stroke-width="1.6"/>
  <path d="M622.5 442.5L626 435L628.5 444Z" fill="#e82a2a"/>
  <path d="M623 450L636 453.5L623.5 456.5Z" fill="#5f86e0"/>
  <circle cx="618.6" cy="445" r="2.2" fill="#1fa84a"/>
</g>

<!-- chuck 1 -->
<g stroke="#3c6a76" stroke-width="0.45">
  <path d="M568 412L598 418Q604 424 601 442L595 470Q590 475 583 474L560 467Q553 458 554 440Q556 419 568 412Z" fill="url(#chuck)"/>
  <path d="M598 418Q604 424 601 442L595 470Q590 475 584 474L586 473Q593 450 596 420Z" fill="#5f97a4"/>
  <path d="M556.6 437.9L581.8 442.9" stroke="#4e7f8a" fill="none"/>
  <rect x="579.5" y="436.5" width="2" height="9" fill="#4f8c9a" stroke="none"/>
  <path d="M596 427L606.5 428.6L607.6 441.2L593.4 440.7Z" fill="#e6ae92" stroke="#8a5a44"/>
  <path d="M581.3 441.2L590 441.2L589.5 449L581.3 447.8Z" fill="#e8b498" stroke="#8a5a44"/>
  <circle cx="585.7" cy="444.5" r="1.1" fill="#6a3a28" stroke="none"/>
  <path d="M590 440.5L608.2 442.3L608.2 453.3L590 452.2Z" fill="#dca084" stroke="#8a5a44"/>
  <path d="M596 444L601 444.5V451L596 450.5Z" fill="#b07a5e" stroke="none"/>
  <path d="M589 452.2L606.5 453.3L605.4 466.5L589.5 468.1Z" fill="#d89a7c" stroke="#8a5a44"/>
  <path d="M598 428L597 466" stroke="#9a6a50" fill="none"/>
  <path d="M609.8 447.3L620.3 449L620.3 454.5L609.8 452.5Z" fill="#d6d6d6" stroke="#888"/>
  <path d="M620.3 449L624 449.5L624 455L620.3 454.5Z" fill="#141414" stroke="none"/>
  <path d="M622 452L624 452.5L624 455L622 454.5Z" fill="#ffffff" stroke="none"/>
</g>
<text x="625.5" y="466.3" font-family="Liberation Sans" font-size="8.5" fill="#cfcfcf">G54</text>

<!-- chuck 2 -->
<g stroke="#3c6a76" stroke-width="0.45">
  <path d="M802 474.3L815.9 473.2L814 492L811 500L808.2 513.8L802.5 513.8L801 503L803 496L800.5 488Z" fill="#d9987a" stroke="#8a5a44"/><path d="M806 475L806 512" stroke="#a86e52" stroke-width="0.8" fill="none"/>
  <path d="M800 494L812 493.5" stroke="#9a6a50"/>
  <path d="M820 467L850 471Q856 476 853 500Q850 522 840 530L810 524Q807 500 810 485Q813 472 820 467Z" fill="url(#chuck2)"/>
  <path d="M850 471Q856 476 853 500Q850 522 840 530Q834 526 837 500Q841 476 850 471Z" fill="#7db5c3"/>
  <ellipse cx="847" cy="503" rx="5.5" ry="21" transform="rotate(12 847 503)" fill="#86c0ce" stroke="#4f8592"/>
  <path d="M846 478Q840 490 839 505Q838 520 842 527" stroke="#4f8592" fill="none"/>
  <path d="M821 468L824 467.5L824.5 473L821.5 474Z" fill="#6aa6b4"/>
  <path d="M809.5 516L813 515L813.5 521L810 522Z" fill="#6aa6b4"/>
</g>
</svg>
<svg class="a" style="left:0;top:0;pointer-events:none" width="1272" height="683" viewBox="0 0 1272 683">
<defs>
  <radialGradient id="sph" cx="0.4" cy="0.35" r="0.7"><stop offset="0" stop-color="#f4f6fa"/><stop offset="0.7" stop-color="#9aa4b8"/><stop offset="1" stop-color="#6a7488"/></radialGradient>
  <linearGradient id="cyl2" x1="0" y1="0" x2="0" y2="1"><stop offset="0" stop-color="#e8ecf2"/><stop offset="1" stop-color="#9ea6b4"/></linearGradient>
</defs>
<path d="M335.2 605.3L368.6 612.3L371.2 630L364.2 658L328.2 651.8L326.4 627Z" fill="#2a2b30"/>
<path d="M356 618L368.6 612.3M356 618L350 655M335 645L355 648" stroke="#303137" stroke-width="0.8" fill="none"/>
<path d="M328.2 651.8L365 659.2" stroke="#d81f5a" stroke-width="2"/>
<path d="M328.2 651.5L323.8 631.5" stroke="#2b58e0" stroke-width="1.3"/>
<path d="M322.7 625.5H325.6L322.7 630H325.6" stroke="#2b58e0" stroke-width="0.9" fill="none"/>
<path d="M328.4 651L339.8 619" stroke="#2a9a6c" stroke-width="1"/>
<path d="M340.3 611.5L342 614.3L344 611.5M342 614.3V616.5" stroke="#2a9a6c" stroke-width="0.9" fill="none"/>
<text x="340.3" y="626" font-family="Liberation Sans" font-style="italic" font-size="8.6" letter-spacing="-0.25" fill="#eeeeee" transform="rotate(14 340.3 626)">Top</text>
<text x="334.5" y="645.5" font-family="Liberation Sans" font-size="6.5" fill="#dddddd" transform="rotate(15 334.5 645.5)">▾ront</text>
<path d="M367.5 629L362.5 643" stroke="#e0e0e0" stroke-width="1" stroke-dasharray="1.5 0.7"/>
<!-- mini toolbar -->
<rect x="358" y="660.7" width="59.7" height="19.8" rx="4" fill="#2a2c34"/>
<path d="M362 667V665.2H364M372 665.2H374V667M374 674.5V676.3H372M364 676.3H362V674.5" stroke="#1fae85" stroke-width="1.2" fill="none"/>
<rect x="364.7" y="667.3" width="6.6" height="6.6" fill="#ffffff" stroke="#111" stroke-width="0.8"/>
<circle cx="387.7" cy="670.6" r="5.4" fill="url(#sph)"/>
<path d="M382.3 670.6H393.1M387.7 665.2V676" stroke="#8890a0" stroke-width="0.4"/>
<path d="M404 665.2H407A4 5.7 0 0 1 407 676.4H404A3 5.7 0 0 1 404 665.2Z" fill="url(#cyl2)"/>
<rect x="408" y="668" width="5.5" height="5.4" rx="2" fill="#dfe3ea"/>
<circle cx="438.9" cy="675.3" r="2" fill="#e81c24"/>
</svg>


<div id="botblack" class="a"></div>
</body></html>
